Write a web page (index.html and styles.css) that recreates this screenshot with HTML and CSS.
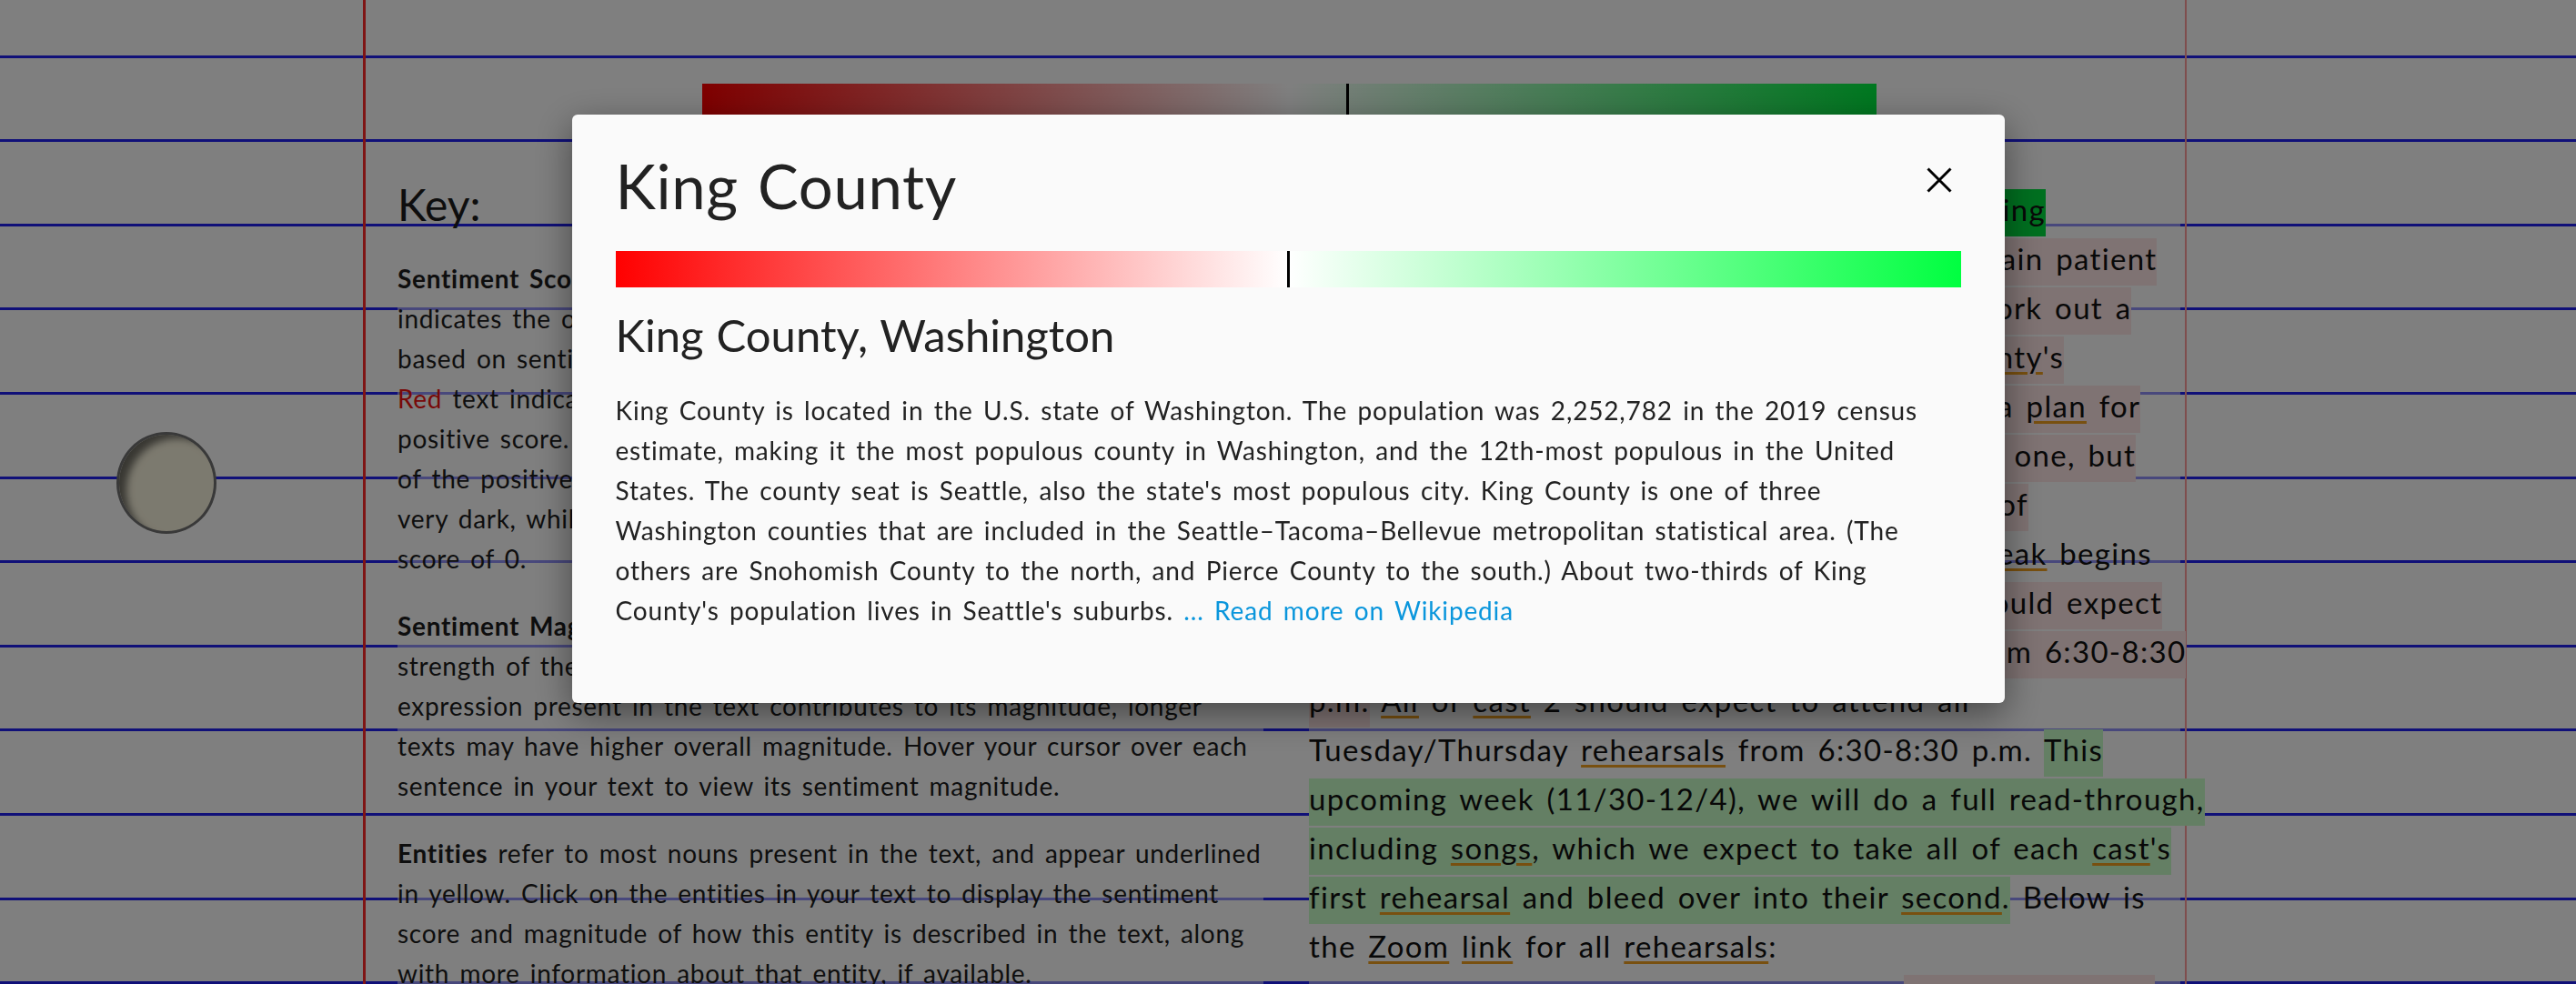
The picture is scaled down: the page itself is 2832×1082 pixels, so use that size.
FILE: index.html
```html
<!DOCTYPE html>
<html lang="en">
<head>
<meta charset="utf-8">
<title>Sentiment Notebook</title>
<link rel="stylesheet" href="styles.css">
</head>
<body>
<div class="page">
  <aside class="margin">
    <div class="hole"></div>
  </aside>
  <main class="sheet">
    <div class="doc-bar">
      <span class="marker" style="left:55%"></span>
    </div>
    <div class="columns">
      <section class="key">
        <h2 class="key-title">Key:</h2>
        <p class="key-text"><strong>Sentiment Score</strong> ranges from -1.0 to 1.0 (negative to positive) and indicates the overall emotion of the text. Sentences are highlighted based on sentiment, while the bar above shows the score of the text. <span class="red">Red</span> text indicates a negative score, whereas green text indicates a positive score. The intensity of the color reflects the relative strength of the positive or negative score: a score that is near ±1.0 will appear very dark, while neutral text is not highlighted at all, with a sentiment score of 0.</p>
        <p class="key-text"><strong>Sentiment Magnitude</strong> ranges from 0 to +inf and indicates the overall strength of the emotion, positive or negative. Because each emotional expression present in the text contributes to its magnitude, longer texts may have higher overall magnitude. Hover your cursor over each sentence in your text to view its sentiment magnitude.</p>
        <p class="key-text"><strong>Entities</strong> refer to most nouns present in the text, and appear underlined in yellow. Click on the entities in your text to display the sentiment score and magnitude of how this entity is described in the text, along with more information about that entity, if available.</p>
      </section>
      <section class="text">
        <span class="s-pos-strong">Thank you for a great first week, we love working<br>with all of you!</span> <span class="s-neg">We ask that you all please remain patient<br>with us while we continue to figure out and work out a<br>rehearsal schedule that follows all of <span class="ent">King County</span>'s<br>COVID guidelines. We're currently working on a <span class="ent">plan</span> for<br>meeting in person and will keep you posted on one, but<br>for now all rehearsals will be on Zoom. Ahead of<br>the holiday, we'll skip this week.</span> Our winter <span class="ent">break</span> begins<br>on Saturday 12/19. <span class="s-neg">Until then, all of cast 1 should expect<br>to attend all Monday/Wednesday rehearsals from 6:30-8:30<br>p.m.</span> <span class="ent">All</span> of <span class="ent">cast</span> 2 should expect to attend all<br>Tuesday/Thursday <span class="ent">rehearsals</span> from 6:30-8:30 p.m. <span class="s-pos">This<br>upcoming week (11/30-12/4), we will do a full read-through,<br>including <span class="ent">songs</span>, which we expect to take all of each <span class="ent">cast</span>'s<br>first <span class="ent">rehearsal</span> and bleed over into their <span class="ent">second</span>.</span> Below is<br>the <span class="ent">Zoom</span> <span class="ent">link</span> for all <span class="ent">rehearsals</span>:<br>Link: https://zoom.us/j/9384552107612 <span class="s-neg">See you all soon!</span>
      </section>
    </div>
  </main>
</div>

<div class="overlay">
  <div class="modal" role="dialog" aria-labelledby="entity-title">
    <div class="modal-head">
      <h1 class="modal-title" id="entity-title">King County</h1>
      <button class="close" aria-label="Close">
        <svg width="28" height="28" viewBox="0 0 28 28"><path d="M1.5 1.5 L26.5 26.5 M26.5 1.5 L1.5 26.5" stroke="#000" stroke-width="3" fill="none"/></svg>
      </button>
    </div>
    <div class="bar">
      <span class="marker" style="left:50%"></span>
    </div>
    <h2 class="modal-sub">King County, Washington</h2>
    <p class="modal-text">King County is located in the U.S. state of Washington. The population was 2,252,782 in the 2019 census estimate, making it the most populous county in Washington, and the 12th-most populous in the United States. The county seat is Seattle, also the state's most populous city. King County is one of three Washington counties that are included in the Seattle–Tacoma–Bellevue metropolitan statistical area. (The others are Snohomish County to the north, and Pierce County to the south.) About two-thirds of King County's population lives in Seattle's suburbs. <a class="wiki" href="#">... Read more on Wikipedia</a></p>
  </div>
</div>
</body>
</html>
```

FILE: styles.css
```css
* { box-sizing: border-box; }

html, body {
  margin: 0;
  padding: 0;
}

body {
  font-family: Lato, "Noto Sans", sans-serif;
  color: #1c1c1c;
  background: #fff;
  overflow: hidden;
}

.page {
  display: flex;
  height: 1082px;
  background-color: #fff;
  background-image: repeating-linear-gradient(to bottom,
    transparent 0, transparent 60.6px,
    #2020f0 60.6px, #2020f0 63.6px,
    transparent 63.6px, transparent 92.6px);
}

.margin {
  flex: none;
  width: 402px;
  border-right: 3px solid #ff2a2a;
  padding: 475px 0 0 128px;
}

.hole {
  width: 110px;
  height: 112px;
  border-radius: 50%;
  background: #f9f4de;
  border: 3px solid #727272;
  box-shadow: inset 12px 8px 8px -4px rgba(0, 0, 0, 0.55);
}

.sheet {
  flex: none;
  width: 2002px;
  border-right: 2px solid #ff9c9c;
  padding: 92px 5px 0 35px;
}

.doc-bar {
  position: relative;
  width: 1291px;
  height: 40px;
  margin: 0 auto;
  background: linear-gradient(to right, #ff0000, #ffffff 50%, #00f040);
}

.marker {
  position: absolute;
  top: 0;
  bottom: 0;
  width: 3px;
  margin-left: -1.5px;
  background: #000;
}

.columns {
  display: grid;
  grid-template-columns: 952px 958px;
  column-gap: 50px;
  align-items: start;
  margin-top: 64px;
}

.key-title {
  margin: 0;
  font-size: 48px;
  font-weight: 400;
  line-height: 1.2;
}

.key-text {
  margin: 30px 0 0;
  font-size: 28px;
  line-height: 44px;
  letter-spacing: 0.025em;
  word-spacing: 0.12em;
  background: rgba(255, 255, 255, 0.5);
}

.key-text strong { font-weight: 700; }

.red { color: #f01010; }

.text {
  margin-top: 7px;
  font-size: 33px;
  line-height: 54px;
  letter-spacing: 0.04em;
  word-spacing: 0.12em;
  white-space: nowrap;
  color: #111;
  background: rgba(255, 255, 255, 0.5);
}

.s-pos-strong,
.s-pos,
.s-neg {
  padding: 2px 0 10px;
}

.s-pos-strong { background: #00e040; }
.s-pos { background: #c8ffc8; }
.s-neg { background: #ffe6e6; }

.ent {
  text-decoration: underline;
  text-decoration-color: #f0a020;
  text-decoration-thickness: 3px;
  text-underline-offset: 4px;
}

/* modal */

.overlay {
  position: fixed;
  inset: 0;
  background: rgba(0, 0, 0, 0.5);
  display: flex;
  justify-content: center;
  align-items: flex-start;
  padding-top: 126px;
}

.modal {
  width: 1575px;
  background: #fafafa;
  border-radius: 6px;
  padding: 38px 48px 80px;
  box-shadow: 0 12px 40px rgba(0, 0, 0, 0.45);
  color: #222;
}

.modal-head {
  display: flex;
  justify-content: space-between;
  align-items: flex-start;
}

.modal-title {
  margin: 0;
  font-size: 67px;
  font-weight: 400;
  line-height: 1.2;
  letter-spacing: 0.01em;
  word-spacing: 0.05em;
}

.close {
  margin-top: 10px;
  width: 48px;
  height: 48px;
  padding: 0;
  border: 0;
  background: none;
  display: flex;
  align-items: center;
  justify-content: center;
  cursor: pointer;
}

.bar {
  position: relative;
  height: 40px;
  margin-top: 32px;
  background: linear-gradient(to right, #ff0000, #ffffff 50%, #00ff40);
}

.modal-sub {
  margin: 23px 0 0;
  font-size: 49px;
  font-weight: 400;
  line-height: 1.2;
  word-spacing: 0.03em;
}

.modal-text {
  margin: 31px 0 0;
  font-size: 28px;
  line-height: 44px;
  letter-spacing: 0.03em;
  word-spacing: 0.12em;
}

.wiki {
  color: #0a96dc;
  text-decoration: none;
}
```
